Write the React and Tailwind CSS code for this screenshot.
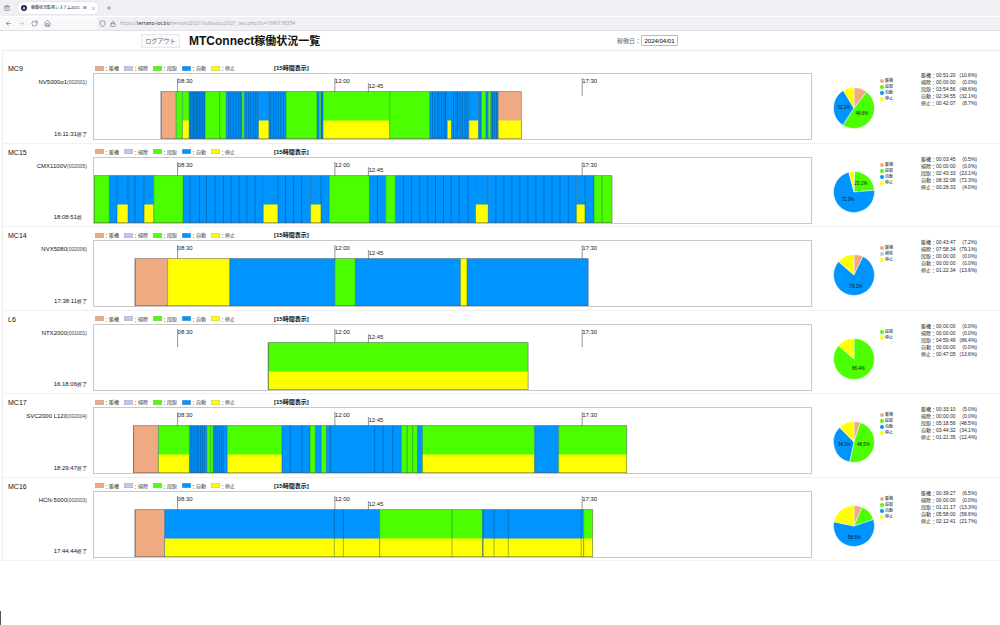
import React from "react";
import { ArrowLeft, ArrowRight, RotateCw, House, Shield, Lock, X, Plus, ShoppingBag } from "lucide-react";

const O = "#f0aa82";
const G = "#4cff00";
const B = "#0094ff";
const Y = "#ffff00";
const L = "#b8cbee";

const KINDS = [
  ["暖機", O],
  ["掃除", L],
  ["段取", G],
  ["自動", B],
  ["停止", Y],
];

// Horizontal chart units: the visible 15 hour window spans 94 to 810.
const AXIS_START = 94;
const AXIS_WIDTH = 716;

const TICKS = [
  { x: 177.5, label: "08:30", top: 4 },
  { x: 334.5, label: "12:00", top: 4 },
  { x: 368, label: "12:45", top: 9 },
  { x: 581.5, label: "17:30", top: 4 },
];

// Each bar: [start, end, fill, lower fill or null, divider positions]
const MACHINES = [
  {
    group: "MC9", name: "NV5000α1", code: "(002001)", end: "16:11:31", suffix: "終了",
    bars: [
      [161, 176, O],
      [176, 182.3, G],
      [182.3, 189, G, Y],
      [189, 205, B, null, [190.5, 192, 193.5, 194.5, 196, 197, 198, 199.5, 201, 202.5, 204]],
      [205, 226, G, null, [219.5]],
      [226, 241.7, B, null, [228.5, 230.5, 233, 235.5, 238, 240]],
      [241.7, 244, G],
      [244, 258.3, B, null, [246, 248.5, 250.5, 253, 255, 257]],
      [258.3, 268.7, B, Y],
      [268.7, 285.7, B, null, [270.5, 273, 275.5, 278, 280.5, 283]],
      [285.7, 316.7, G],
      [316.7, 319, B],
      [319, 320.5, G],
      [320.5, 322.7, B, null, [321.5]],
      [322.7, 389.3, G, Y],
      [389.3, 429.3, G],
      [429.3, 446.7, B, null, [432, 434.5, 437, 438.5, 441, 443.5, 445]],
      [446.7, 451, B, Y],
      [451, 468.3, B, null, [453, 455.5, 457, 459.5, 462, 464.5, 466.5]],
      [468.3, 478, B, Y],
      [478, 481, B, null, [479.5]],
      [481, 485.3, G],
      [485.3, 487.7, B],
      [487.7, 490.3, G],
      [490.3, 497.7, B, null, [492, 494, 496]],
      [497.7, 520.7, O, Y],
    ],
    stats: ["00:51:20", "00:00:00", "03:54:56", "02:34:55", "00:42:07"],
    pct: [10.6, 0.0, 48.6, 32.1, 8.7],
    legend: [0, 2, 3, 4],
    labels: [["32.1%", 11, 21.5], ["48.6%", 29, 27.5]],
  },
  {
    group: "MC15", name: "CMX1100V", code: "(002005)", end: "18:08:51", suffix: "終",
    bars: [
      [94, 109.3, G],
      [109.3, 117, B],
      [117, 128, B, Y],
      [128, 144, B, null, [135]],
      [144, 153.7, B, Y],
      [153.7, 183, G],
      [183, 263, B, null, [190, 199.3, 206.3, 215, 223.3, 231, 239, 246.7, 255]],
      [263, 277.7, B, Y],
      [277.7, 310.3, B, null, [285.3, 293.3, 301.3]],
      [310.3, 320.7, B, Y],
      [320.7, 329, B],
      [329, 369, G],
      [369, 385.3, B, null, [377]],
      [385.3, 395, G],
      [395, 475, B, null, [403, 411, 419.3, 427.3, 435, 443, 450.7, 458.7, 467.3]],
      [475, 487.7, B, Y],
      [487.7, 575.7, B, null, [495.3, 503.3, 511.3, 519.3, 527.3, 535.3, 543.3, 551.3, 559.3, 567.7]],
      [575.7, 584.3, B, Y],
      [584.3, 593.3, B],
      [593.3, 611.3, G, null, [601.3]],
    ],
    stats: ["00:03:45", "00:00:00", "02:43:33", "08:32:08", "00:28:33"],
    pct: [0.5, 0.0, 23.1, 72.3, 4.0],
    legend: [0, 2, 3, 4],
    labels: [["23.1%", 28, 14], ["72.3%", 15, 29.5]],
  },
  {
    group: "MC14", name: "NVX5080", code: "(002006)", end: "17:38:11", suffix: "終了",
    bars: [
      [135, 167.5, O],
      [167.5, 229.5, Y],
      [229.5, 334.5, B],
      [334.5, 355, G],
      [355, 460, B],
      [460, 466.5, Y],
      [466.5, 587.5, B],
    ],
    stats: ["00:43:47", "07:58:34", "00:00:00", "00:00:00", "01:22:34"],
    pct: [7.2, 79.1, 0.0, 0.0, 13.6],
    pieFill: { 1: B },
    legend: [0, 1, 4],
    labels: [["79.1%", 23, 33.5]],
  },
  {
    group: "L6", name: "NTX2000", code: "(001001)", end: "16:18:06", suffix: "終了",
    bars: [[268, 527.5, G, Y]],
    stats: ["00:00:00", "00:00:00", "04:59:49", "00:00:00", "00:47:05"],
    pct: [0.0, 0.0, 86.4, 0.0, 13.6],
    legend: [2, 4],
    labels: [["86.4%", 25.5, 32]],
  },
  {
    group: "MC17", name: "SVC2000 L120", code: "(002004)", end: "18:29:47", suffix: "終了",
    bars: [
      [133.5, 158.3, O],
      [158.3, 189.3, G, Y],
      [189.3, 206.7, B, null, [191, 193, 195, 197, 198.5, 200.5, 202.5, 204.5]],
      [206.7, 213, G, null, [210]],
      [213, 227, B, null, [215, 217, 219, 221, 223]],
      [227, 281.7, G, Y],
      [281.7, 309.7, B, null, [290, 301.7]],
      [309.7, 315, G],
      [315, 321, B],
      [321, 326, G],
      [326, 401, B, null, [330, 374.3, 382.7, 392.3]],
      [401, 417, G, null, [406.7, 412.3]],
      [417, 422, B],
      [422, 534, G, Y],
      [534, 558, B],
      [558, 626, G, Y],
    ],
    stats: ["00:33:10", "00:00:00", "05:18:56", "03:44:32", "01:21:35"],
    pct: [5.0, 0.0, 48.5, 34.1, 12.4],
    legend: [0, 2, 3, 4],
    labels: [["34.1%", 11.5, 24.5], ["48.5%", 30.5, 24.5]],
  },
  {
    group: "MC16", name: "HCN-5000", code: "(002003)", end: "17:44:44", suffix: "終了",
    bars: [
      [135, 164.5, O],
      [164.5, 379.3, B, Y, [334, 343]],
      [379.3, 482, G, Y, [451.5]],
      [482, 583, B, Y, [482.7, 493.5, 507.7, 580.5]],
      [583, 592, G, Y],
    ],
    stats: ["00:39:27", "00:00:00", "01:21:17", "05:58:00", "02:12:41"],
    pct: [6.5, 0.0, 13.3, 58.6, 21.7],
    legend: [0, 2, 3, 4],
    labels: [["58.6%", 21.5, 34]],
  },
];

function BrowserChrome() {
  return (
    <header className="text-[#5b5b66]">
      <div className="flex h-4 items-center gap-2 bg-[#f0f0f4] pl-1">
        <ShoppingBag className="size-[6px]" />
        <div className="flex h-3 w-[80px] items-center gap-1 rounded-sm bg-white px-[3px] shadow-[0_0_1px_#8f8f9d]">
          <svg viewBox="0 0 10 10" className="size-[6px] shrink-0">
            <circle cx="5" cy="5" r="5" fill="#20205a" />
            <path d="M5 2 7.5 7H6L5 5 4 7H2.5Z" fill="#fff" />
          </svg>
          <span className="flex-1 text-[4px] leading-[6px] whitespace-nowrap text-[#222]">稼働状況監視システム2021 - M</span>
          <button aria-label="タブを閉じる"><X className="size-[5px]" /></button>
        </div>
        <button aria-label="新しいタブ"><Plus className="size-[6px]" /></button>
      </div>
      <div className="flex h-[15px] items-center border-t border-b border-t-white border-b-[#e0e0e6] bg-[#f9f9fb]">
        <nav className="flex w-[97px] items-center gap-[6px] pl-[5px]">
          <button aria-label="戻る"><ArrowLeft className="size-[7px]" /></button>
          <button aria-label="進む"><ArrowRight className="size-[7px] text-[#bbb]" /></button>
          <button aria-label="再読み込み"><RotateCw className="size-[7px]" /></button>
          <button aria-label="ホーム"><House className="size-[7px]" /></button>
        </nav>
        <div className="flex h-[13px] flex-1 items-center gap-1 bg-[#f0f0f4] pl-[2px]">
          <Shield className="size-[7px]" />
          <Lock className="size-[6px]" />
          <span className="font-['Open_Sans',sans-serif] text-[5px] leading-[7px] text-[#a0a0a8]">
            https://<span className="text-[#15141a]">terrano-iot.biz</span>/terrano2021/listKadou2021_test.php?ts=1690158354
          </span>
        </div>
      </div>
    </header>
  );
}

function Legend() {
  return (
    <div className="flex items-center pl-[2px]">
      <ul className="flex">
        {KINDS.map(([name, color]) => (
          <li key={name} className="flex w-[29px] items-center text-[5px] leading-[8px] text-[#333]">
            <svg viewBox="0 0 9 5" className="h-[5px] w-[9px]">
              <rect x="0.15" y="0.15" width="8.7" height="4.7" fill={color} stroke="#999" strokeWidth="0.3" />
            </svg>
            ：<span>{name}</span>
          </li>
        ))}
      </ul>
      <span className="pl-[34px] text-[6px] leading-[8px] font-bold">[15時間表示]</span>
    </div>
  );
}

function Timeline({ bars }) {
  const first = bars[0][0];
  const last = bars[bars.length - 1][1];
  return (
    <div className="relative h-[67px] border border-[#c8c8c8]">
      <svg
        viewBox={`${AXIS_START} 0 ${AXIS_WIDTH} 65`}
        preserveAspectRatio="none"
        className="block h-full w-full"
        aria-hidden="true"
      >
        {TICKS.map((t) => (
          <path key={t.label} d={`M${t.x} ${t.top}V22`} stroke="#777" strokeWidth="0.8" />
        ))}
        {bars.map(([a, b, fill, low, dividers], i) => (
          <g key={i}>
            <rect x={a} y="17.5" width={b - a} height="47.5" fill={fill} />
            {low && <rect x={a} y="46.5" width={b - a} height="18.5" fill={low} />}
            {[a, ...(dividers || [])].map((x, j) => (
              <path key={j} d={`M${x} 17.5V65`} stroke="#063a5e" strokeOpacity="0.55" strokeWidth="0.7" />
            ))}
          </g>
        ))}
        <rect x={first} y="17.7" width={last - first} height="47" fill="none" stroke="#555" strokeOpacity="0.7" strokeWidth="0.7" />
      </svg>
      {TICKS.map((t) => (
        <span
          key={t.label}
          className="absolute text-[6px] leading-[8px] text-[#222]"
          style={{ left: `${((t.x - AXIS_START) / AXIS_WIDTH) * 100}%`, top: t.top - 1 }}
        >
          {t.label}
        </span>
      ))}
    </div>
  );
}

function Pie({ pct, pieFill = {}, labels }) {
  const total = pct.reduce((s, v) => s + v, 0);
  const point = (v) => {
    const a = (v / total) * Math.PI * 2;
    return `${21 + 20.5 * Math.sin(a)} ${21 - 20.5 * Math.cos(a)}`;
  };
  let sum = 0;
  return (
    <svg viewBox="0 0 42 42" className="size-[42px] shrink-0">
      {pct.map((v, i) => {
        const from = sum;
        sum += v;
        if (!v) return null;
        return (
          <path
            key={i}
            d={`M21 21L${point(from)}A20.5 20.5 0 ${v / total > 0.5 ? 1 : 0} 1 ${point(sum)}Z`}
            fill={pieFill[i] || KINDS[i][1]}
            stroke="#fff"
            strokeWidth="0.5"
          />
        );
      })}
      {labels.map(([text, x, y]) => (
        <text key={text} x={x} y={y} fontSize="4.5" textAnchor="middle" fill="#111">{text}</text>
      ))}
    </svg>
  );
}

function Machine({ m }) {
  return (
    <section className="grid grid-cols-[90px_1fr_188px] border-b border-[#f0f0f2]">
      <div className="flex flex-col pt-1 pr-[6px] pl-[5px]">
        <h2 className="text-[7px] leading-[9px]">{m.group}</h2>
        <p className="mt-[5px] text-right text-[6px] leading-[8px] whitespace-nowrap">
          {m.name}<span className="text-[5px] text-[#444]">{m.code}</span>
        </p>
        <p className={m.suffix.length > 1 ? "mt-auto pb-1 text-right text-[6px] leading-[9px]" : "mt-auto pr-[5px] pb-1 text-right text-[6px] leading-[9px]"}>
          {m.end}<span className="text-[5px] text-[#333]">{m.suffix}</span>
        </p>
      </div>
      <div className="flex flex-col gap-px pt-1">
        <Legend />
        <Timeline bars={m.bars} />
      </div>
      <div className="flex pl-[21px]">
        <div className="pt-[27px]">
          <Pie pct={m.pct} pieFill={m.pieFill} labels={m.labels} />
        </div>
        <ul className="w-[46px] pt-[18px] pl-[5px]">
          {m.legend.map((k) => (
            <li key={k} className="flex items-center gap-px text-[4px] leading-[6px]">
              <svg viewBox="0 0 4 4" className="size-1"><circle cx="2" cy="2" r="2" fill={KINDS[k][1]} /></svg>
              {KINDS[k][0]}
            </li>
          ))}
        </ul>
        <table className="mt-3 w-[56px] self-start text-[5px] leading-[7px] text-[#222]">
          <tbody>
            {KINDS.map(([name], i) => (
              <tr key={name}>
                <th scope="row" className="w-[15px] p-0 text-left font-normal whitespace-nowrap">{name}：</th>
                <td className="p-0">{m.stats[i]}</td>
                <td className="p-0 text-right">({m.pct[i].toFixed(1)}%)</td>
              </tr>
            ))}
          </tbody>
        </table>
      </div>
    </section>
  );
}

export default function App() {
  return (
    <div className="flex min-h-screen flex-col bg-white font-['Liberation_Sans','Noto_Sans_CJK_JP',sans-serif] text-[#111]">
      <BrowserChrome />
      <div className="flex h-[19px] items-center pl-[141px]">
        <button className="h-[14px] w-[39px] border border-[#e8e8e8] bg-[#fafafa] text-[6px] leading-[8px] text-[#666]">ログアウト</button>
        <h1 className="w-[428px] pl-[9px] text-[12px] leading-[16px] font-bold">
          MTConnect<span className="text-[11px]">稼働状況一覧</span>
        </h1>
        <label htmlFor="date" className="pl-[9px] text-[6px] leading-[8px] text-[#666]">稼働日：</label>
        <input
          id="date"
          type="text"
          defaultValue="2024/04/01"
          className="h-[11px] w-[37px] rounded-[1px] border border-[#bbb] text-center text-[6px] leading-[8px] text-black"
        />
      </div>
      <main className="ml-[2px] border-t border-l border-[#ececee] pt-[9px]">
        <div className="grid min-h-[501px] auto-rows-fr">
          {MACHINES.map((m) => <Machine key={m.group} m={m} />)}
        </div>
      </main>
      <div className="mt-auto h-[14px] w-px bg-[#555]" />
    </div>
  );
}
